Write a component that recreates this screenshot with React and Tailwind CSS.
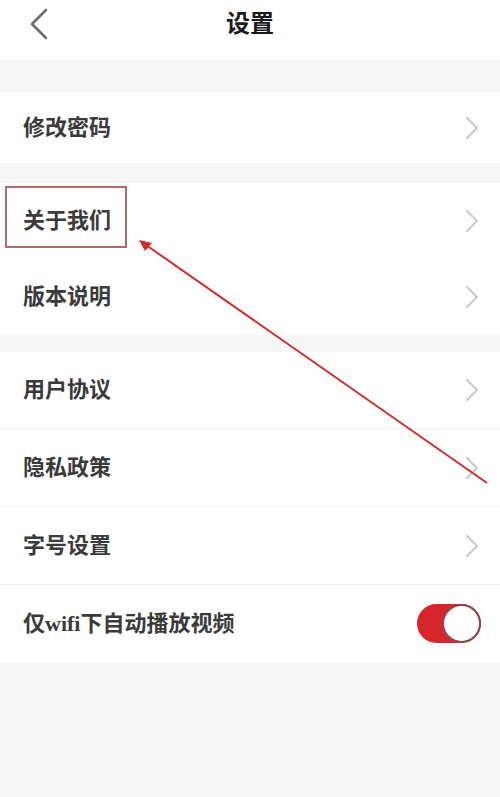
import React from "react";

const font = { fontFamily: '"Liberation Serif", "Noto Sans CJK SC", serif' };

function Chevron() {
  return (
    <svg width="14" height="22" viewBox="0 0 14 22" className="shrink-0">
      <polyline points="2,1 12,11 2,21" fill="none" stroke="#c8c8c8" strokeWidth="2" strokeLinecap="round" strokeLinejoin="round" />
    </svg>
  );
}

function Row({ label, h, divider, right }) {
  return (
    <div className={`flex items-center justify-between bg-white pl-[23px] pr-[21px] ${h} ${divider ? "border-b border-[#efefef]" : ""}`}>
      <span className="text-[22px] font-bold text-[#3a3a3a] leading-none" style={font}>{label}</span>
      {right || <Chevron />}
    </div>
  );
}

function Toggle() {
  return (
    <div className="relative w-[64px] h-[39px] rounded-full bg-[#d7262b] shrink-0 -mr-[2px]">
      <div className="absolute right-0 top-0 w-[39px] h-[39px] rounded-full bg-white border-[2px] border-[#8a4a4c]" />
    </div>
  );
}

export default function App() {
  return (
    <div className="relative w-[500px] h-[797px] bg-[#f6f6f6] overflow-hidden">
      <div className="h-[60px] bg-white flex items-center justify-center relative">
        <svg width="22" height="32" viewBox="0 0 22 32" className="absolute left-[28px] top-[8px]">
          <polyline points="18,2 4,16 18,30" fill="none" stroke="#6a6a6a" strokeWidth="2.5" strokeLinecap="round" strokeLinejoin="round" />
        </svg>
        <span className="text-[24px] font-bold text-[#1a1a1a] leading-none -mt-[12px]" style={font}>设置</span>
      </div>
      <div className="h-[32px]" />
      <Row label="修改密码" h="h-[71px]" />
      <div className="h-[20px]" />
      <Row label="关于我们" h="h-[76px]" />
      <Row label="版本说明" h="h-[76px]" />
      <div className="h-[17px]" />
      <Row label="用户协议" h="h-[77px]" divider />
      <Row label="隐私政策" h="h-[78px]" divider />
      <Row label="字号设置" h="h-[78px]" divider />
      <Row label="仅wifi下自动播放视频" h="h-[77px]" right={<Toggle />} />

      <div className="absolute left-[5px] top-[186px] w-[122px] h-[62px] border-2 border-[#b06a6a]" />
      <svg className="absolute left-0 top-0" width="500" height="797" viewBox="0 0 500 797">
        <line x1="146" y1="245" x2="487" y2="483" stroke="#d42a2a" strokeWidth="2" />
        <polygon points="139,240 152,243 145,251" fill="#d42a2a" />
      </svg>
    </div>
  );
}
